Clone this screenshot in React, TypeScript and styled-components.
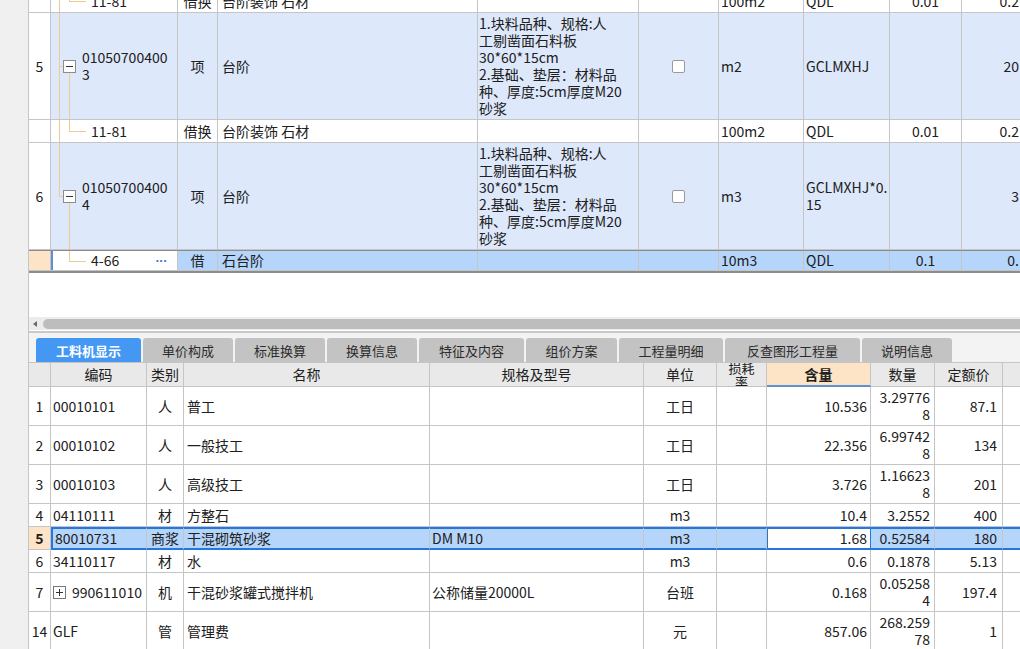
import * as React from 'react'
import styled, { createGlobalStyle } from 'styled-components'

const gridLine = '#c5c5c5'
const focusBlue = '#2477e0'
const peach = '#fde4c6'

const GlobalStyle = createGlobalStyle`
    html, body {
        margin: 0;
        padding: 0;
        overflow: hidden;
        background: #fff;
    }
    body {
        font-family: "Noto Sans CJK SC", "Noto Sans", sans-serif;
        font-size: 14px;
        color: #202020;
    }
    * {
        box-sizing: border-box;
    }
`

const Page = styled('div')`
    display: flex;
    width: 1020px;
    height: 649px;
    overflow: hidden;
`

const Gutter = styled('div')`
    flex: none;
    width: 28px;
    background: #f0f0f0;
`

const Main = styled('div')`
    flex: 1;
    min-width: 0;
    display: flex;
    flex-direction: column;
    border-left: 1px solid ${gridLine};
    overflow: hidden;
`

const TopPanel = styled('div')`
    flex: none;
    height: 317px;
    overflow: hidden;
    background: #fff;
`

const TopBody = styled('div')`
    margin-top: -10px;
`

type Tone = 'plain' | 'item' | 'current'

const TopRow = styled('div')<{ $h: number, $tone: Tone }>`
    display: grid;
    grid-template-columns: 22px 127px 40px 260px 161px 80px 85px 86px 72px 62px;
    height: ${p => p.$h}px;
    background: ${p => p.$tone === 'item' ? '#dde8fb' : p.$tone === 'current' ? '#b5d5fb' : '#fff'};
    ${p => p.$tone === 'current' && `
        border-top: 1px solid #8c8c8c;
        border-bottom: 2px solid #8c8c8c;
        box-shadow: 0 -1px 0 #8c8c8c;
        & > * { border-bottom: none; }
    `}
`

const Cell = styled('div')<{ $align?: 'left' | 'center' | 'right', $pl?: number, $pr?: number }>`
    position: relative;
    display: flex;
    align-items: center;
    justify-content: ${p => p.$align === 'center' ? 'center' : p.$align === 'right' ? 'flex-end' : 'flex-start'};
    text-align: ${p => p.$align || 'left'};
    padding-left: ${p => p.$pl ?? 2}px;
    padding-right: ${p => p.$pr ?? 2}px;
    border-right: 1px solid ${gridLine};
    border-bottom: 1px solid ${gridLine};
    line-height: 17px;
    white-space: nowrap;
    overflow: hidden;
    min-width: 0;
`

const NumCell = styled(Cell)<{ $current?: boolean }>`
    justify-content: center;
    padding: 0;
    background: ${p => p.$current ? peach : '#fff'};
    font-weight: ${p => p.$current ? 700 : 400};
`

const CodeCell = styled(Cell)<{ $current?: boolean }>`
    ${p => p.$current && `
        background: #fff;
        box-shadow: inset 2px 0 0 #5b8fd6;
    `}
`

const More = styled('span')`
    margin-left: auto;
    padding-right: 8px;
    font-family: "Liberation Sans", sans-serif;
    font-size: 13px;
    font-weight: 700;
    color: #3a78d0;
    letter-spacing: -0.5px;
`

const Stack = styled('div')`
    white-space: pre;
`

const Check = styled('span')`
    display: block;
    width: 13px;
    height: 13px;
    border: 1px solid #9a9a9a;
    border-radius: 2px;
    background: #fff;
`

const TreeSvg = styled('svg')`
    position: absolute;
    left: 0;
    top: 0;
    pointer-events: none;
`

const HScroll = styled('div')`
    flex: none;
    display: flex;
    align-items: center;
    height: 13px;
    padding-left: 4px;
    background: #ececec;
`

const Arrow = styled('span')`
    width: 0;
    height: 0;
    border-top: 3px solid transparent;
    border-bottom: 3px solid transparent;
    border-right: 4px solid #6a6a6a;
    margin-right: 6px;
`

const Thumb = styled('div')`
    flex: 1;
    height: 10px;
    border-radius: 5px 0 0 5px;
    background: #bdbdbd;
`

const Divider = styled('div')`
    flex: none;
    height: 3px;
    border-top: 1px solid #fff;
    background: #c9c9c9;
`

const TabBar = styled('div')`
    flex: none;
    display: flex;
    align-items: flex-end;
    gap: 2px;
    height: 29px;
    padding-left: 7px;
    background: #f3f3f3;
`

const Tab = styled('div')<{ $active?: boolean, $w: number }>`
    flex: none;
    display: flex;
    align-items: center;
    justify-content: center;
    width: ${p => p.$w}px;
    height: 24px;
    border-radius: 3px 3px 0 0;
    background: ${p => p.$active ? '#4498f4' : '#c3c3c3'};
    color: ${p => p.$active ? '#fff' : '#2b2b2b'};
    font-size: 13px;
    font-weight: ${p => p.$active ? 700 : 400};
`

const BottomGrid = styled('div')`
    flex: 1;
    border-top: 1px solid ${gridLine};
    overflow: hidden;
`

const BottomRow = styled('div')<{ $h: number, $current?: boolean, $head?: boolean }>`
    display: grid;
    grid-template-columns: 22px 96px 37px 246px 214px 73px 50px 104px 64px 68px 40px;
    height: ${p => p.$h}px;
    background: ${p => p.$head ? '#e9e9e9' : p.$current ? '#b5d5fb' : '#fff'};
    ${p => p.$current && `
        & > *:not(:first-child) {
            border-top: 2px solid ${focusBlue};
            border-bottom: 2px solid ${focusBlue};
        }
        & > *:nth-child(2) { border-left: 2px solid ${focusBlue}; }
    `}
`

const HeadCell = styled(Cell)<{ $sorted?: boolean }>`
    justify-content: center;
    ${p => p.$sorted && `
        background: ${peach};
        font-weight: 700;
        border-bottom: 2px solid #5b93d9;
    `}
`

const TinyHead = styled('div')`
    font-size: 13px;
    line-height: 14px;
    text-align: center;
    white-space: pre;
`

const FocusCell = styled(Cell)`
    background: #fff;
    border-right-color: ${focusBlue};
    box-shadow: inset 1px 0 0 ${focusBlue};
`

const ExpandBox = styled('svg')`
    flex: none;
    margin-right: 6px;
`

function Lines({ lines }: { lines: string[] }) {
    return (
        <Stack>
            {lines.map((l, i) => <div key={i}>{l}</div>)}
        </Stack>
    )
}

function Tree({ kind, ch, cont }: { kind: 'group' | 'leaf', ch: number, cont: boolean }) {
    const mid = Math.floor(ch / 2) + 0.5
    const c = '#efca93'
    return (
        <TreeSvg width={40} height={ch} shapeRendering="crispEdges">
            {kind === 'group' ? (
                <>
                    <line x1={8.5} y1={0} x2={8.5} y2={cont ? ch : mid} stroke={c} />
                    <line x1={8.5} y1={mid} x2={12.5} y2={mid} stroke={c} />
                    <line x1={18.5} y1={mid + 6} x2={18.5} y2={ch} stroke={c} />
                    <rect x={12.5} y={mid - 6} width={12} height={12} fill="#fff" stroke="#8c8c8c" />
                    <line x1={15} y1={mid} x2={22} y2={mid} stroke="#333" />
                </>
            ) : (
                <>
                    {cont && <line x1={8.5} y1={0} x2={8.5} y2={ch} stroke={c} />}
                    <line x1={18.5} y1={0} x2={18.5} y2={mid} stroke={c} />
                    <line x1={18.5} y1={mid} x2={35} y2={mid} stroke={c} />
                </>
            )}
        </TreeSvg>
    )
}

interface ITopRow {
    height: number
    tone: Tone
    num: string
    tree: 'group' | 'leaf'
    cont: boolean
    code: string[]
    type: string
    name: string
    feat: string[]
    check: boolean
    unit: string
    expr: string[]
    rate: string
    qty: string
}

const features = [
    '1.块料品种、规格:人',
    '工剔凿面石料板',
    '30*60*15cm',
    '2.基础、垫层：材料品',
    '种、厚度:5cm厚度M20',
    '砂浆',
]

const topRows: ITopRow[] = [
    { height: 23, tone: 'plain', num: '', tree: 'leaf', cont: true, code: ['11-81'], type: '借换', name: '台阶装饰 石材', feat: [], check: false, unit: '100m2', expr: ['QDL'], rate: '0.01', qty: '0.2' },
    { height: 107, tone: 'item', num: '5', tree: 'group', cont: true, code: ['01050700400', '3'], type: '项', name: '台阶', feat: features, check: true, unit: 'm2', expr: ['GCLMXHJ'], rate: '', qty: '20' },
    { height: 23, tone: 'plain', num: '', tree: 'leaf', cont: true, code: ['11-81'], type: '借换', name: '台阶装饰 石材', feat: [], check: false, unit: '100m2', expr: ['QDL'], rate: '0.01', qty: '0.2' },
    { height: 107, tone: 'item', num: '6', tree: 'group', cont: false, code: ['01050700400', '4'], type: '项', name: '台阶', feat: features, check: true, unit: 'm3', expr: ['GCLMXHJ*0.', '15'], rate: '', qty: '3' },
    { height: 23, tone: 'current', num: '', tree: 'leaf', cont: false, code: ['4-66'], type: '借', name: '石台阶', feat: [], check: false, unit: '10m3', expr: ['QDL'], rate: '0.1', qty: '0.' },
]

const tabs = [
    { label: '工料机显示', w: 105 },
    { label: '单价构成', w: 90 },
    { label: '标准换算', w: 90 },
    { label: '换算信息', w: 90 },
    { label: '特征及内容', w: 105 },
    { label: '组价方案', w: 91 },
    { label: '工程量明细', w: 104 },
    { label: '反查图形工程量', w: 135 },
    { label: '说明信息', w: 90 },
]

interface IBottomRow {
    height: number
    num: string
    code: string
    expand?: boolean
    type: string
    name: string
    spec: string
    unit: string
    content: string
    amount: string[]
    price: string
    current?: boolean
}

const bottomRows: IBottomRow[] = [
    { height: 39, num: '1', code: '00010101', type: '人', name: '普工', spec: '', unit: '工日', content: '10.536', amount: ['3.29776', '8'], price: '87.1' },
    { height: 39, num: '2', code: '00010102', type: '人', name: '一般技工', spec: '', unit: '工日', content: '22.356', amount: ['6.99742', '8'], price: '134' },
    { height: 39, num: '3', code: '00010103', type: '人', name: '高级技工', spec: '', unit: '工日', content: '3.726', amount: ['1.16623', '8'], price: '201' },
    { height: 23, num: '4', code: '04110111', type: '材', name: '方整石', spec: '', unit: 'm3', content: '10.4', amount: ['3.2552'], price: '400' },
    { height: 23, num: '5', code: '80010731', type: '商浆', name: '干混砌筑砂浆', spec: 'DM M10', unit: 'm3', content: '1.68', amount: ['0.52584'], price: '180', current: true },
    { height: 23, num: '6', code: '34110117', type: '材', name: '水', spec: '', unit: 'm3', content: '0.6', amount: ['0.1878'], price: '5.13' },
    { height: 39, num: '7', code: '990611010', expand: true, type: '机', name: '干混砂浆罐式搅拌机', spec: '公称储量20000L', unit: '台班', content: '0.168', amount: ['0.05258', '4'], price: '197.4' },
    { height: 39, num: '14', code: 'GLF', type: '管', name: '管理费', spec: '', unit: '元', content: '857.06', amount: ['268.259', '78'], price: '1' },
]

class App extends React.Component {
    public renderTopRow(r: ITopRow, i: number): JSX.Element {
        const current = r.tone === 'current'
        const ch = current ? 20 : r.height - 1
        return (
            <TopRow key={i} $h={r.height} $tone={r.tone}>
                <NumCell $current={current}>{r.num}</NumCell>
                <CodeCell $current={current} $pl={r.tree === 'group' ? 31 : 40}>
                    <Tree kind={r.tree} ch={ch} cont={r.cont} />
                    <Lines lines={r.code} />
                    {current && <More>···</More>}
                </CodeCell>
                <Cell $align="center">{r.type}</Cell>
                <Cell $pl={4}>{r.name}</Cell>
                <Cell $pl={1}><Lines lines={r.feat} /></Cell>
                <Cell $align="center">{r.check && <Check />}</Cell>
                <Cell>{r.unit}</Cell>
                <Cell><Lines lines={r.expr} /></Cell>
                <Cell $align="center">{r.rate}</Cell>
                <Cell $align="right" $pr={4}>{r.qty}</Cell>
            </TopRow>
        )
    }

    public renderBottomRow(r: IBottomRow, i: number): JSX.Element {
        const ContentCell = r.current ? FocusCell : Cell
        return (
            <BottomRow key={i} $h={r.height} $current={r.current}>
                <NumCell $current={r.current}>{r.num}</NumCell>
                <Cell $pl={2}>
                    {r.expand && (
                        <ExpandBox width={13} height={13} shapeRendering="crispEdges">
                            <rect x={0.5} y={0.5} width={12} height={12} fill="#fff" stroke="#777" />
                            <line x1={3} y1={6.5} x2={10} y2={6.5} stroke="#333" />
                            <line x1={6.5} y1={3} x2={6.5} y2={10} stroke="#333" />
                        </ExpandBox>
                    )}
                    {r.code}
                </Cell>
                <Cell $align="center" $pl={0} $pr={0}>{r.type}</Cell>
                <Cell $pl={3}>{r.name}</Cell>
                <Cell $pl={2}>{r.spec}</Cell>
                <Cell $align="center">{r.unit}</Cell>
                <Cell />
                <ContentCell $align="right" $pr={3}>{r.content}</ContentCell>
                <Cell $align="right" $pr={4}><Lines lines={r.amount} /></Cell>
                <Cell $align="right" $pr={5}>{r.price}</Cell>
                <Cell />
            </BottomRow>
        )
    }

    public render(): JSX.Element {
        return (
            <Page>
                <GlobalStyle />
                <Gutter />
                <Main>
                    <TopPanel>
                        <TopBody>
                            {topRows.map((r, i) => this.renderTopRow(r, i))}
                        </TopBody>
                    </TopPanel>
                    <HScroll>
                        <Arrow />
                        <Thumb />
                    </HScroll>
                    <Divider />
                    <TabBar>
                        {tabs.map((t, i) => (
                            <Tab key={t.label} $w={t.w} $active={i === 0}>{t.label}</Tab>
                        ))}
                    </TabBar>
                    <BottomGrid>
                        <BottomRow $h={24} $head={true}>
                            <HeadCell />
                            <HeadCell>编码</HeadCell>
                            <HeadCell $pl={0} $pr={0}>类别</HeadCell>
                            <HeadCell>名称</HeadCell>
                            <HeadCell>规格及型号</HeadCell>
                            <HeadCell>单位</HeadCell>
                            <HeadCell><TinyHead>{'损耗\n率'}</TinyHead></HeadCell>
                            <HeadCell $sorted={true}>含量</HeadCell>
                            <HeadCell>数量</HeadCell>
                            <HeadCell>定额价</HeadCell>
                            <HeadCell />
                        </BottomRow>
                        {bottomRows.map((r, i) => this.renderBottomRow(r, i))}
                    </BottomGrid>
                </Main>
            </Page>
        )
    }
}

export default App
